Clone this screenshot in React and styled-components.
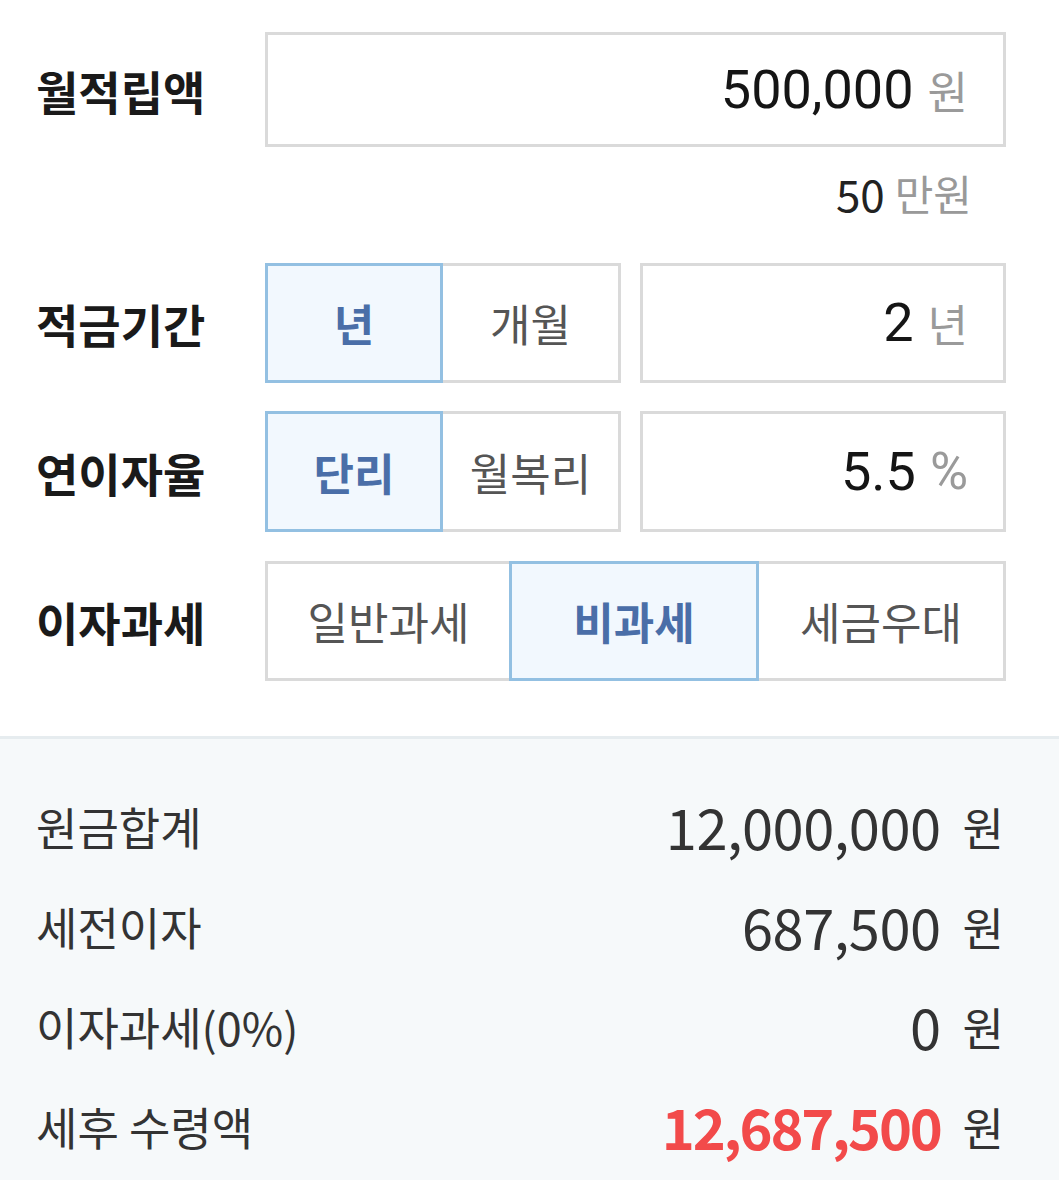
import React from "react";
import styled, { createGlobalStyle } from "styled-components";

const Global = createGlobalStyle`
  html, body { margin: 0; padding: 0; background: #ffffff; }
  body { font-family: "Noto Sans CJK KR", "Noto Sans", sans-serif; -webkit-font-smoothing: antialiased; }
  * { box-sizing: border-box; }
`;

const Page = styled.div`
  width: 1059px;
  min-height: 1180px;
  display: flex;
  flex-direction: column;
  background: #ffffff;
`;

const Form = styled.section`
  padding: 32px 53px 55px 36px;
  display: flex;
  flex-direction: column;
`;

const Row = styled.div`
  display: grid;
  grid-template-columns: 229px 1fr;
  align-items: center;
  height: ${(p) => p.h || 120}px;
  margin-bottom: ${(p) => p.mb || 0}px;
`;

const Label = styled.div`
  font-family: "Noto Sans CJK KR", sans-serif;
  font-weight: 700;
  font-size: 46px;
  color: #1a1a1a;
  letter-spacing: 0;
  line-height: 1;
`;

const Controls = styled.div`
  display: grid;
  grid-template-columns: ${(p) => p.cols || "1fr"};
  column-gap: ${(p) => p.gap || 0}px;
  height: 100%;
`;

const ValueBox = styled.div`
  border: 3px solid #dadada;
  background: #ffffff;
  height: 100%;
  display: flex;
  align-items: center;
  justify-content: flex-end;
  padding-right: 35px;
  gap: 14px;
`;

const Num = styled.span`
  font-family: Roboto, "Liberation Sans", sans-serif;
  font-size: 54px;
  color: #151515;
  line-height: 1;
`;

const Unit = styled.span`
  font-family: ${(p) => (p.latin ? 'Roboto, "Liberation Sans", sans-serif' : '"Noto Sans CJK KR", sans-serif')};
  font-size: ${(p) => (p.latin ? 52 : 44)}px;
  color: #9a9a9a;
  line-height: 1;
`;

const Hint = styled.div`
  height: 116px;
  display: flex;
  align-items: center;
  justify-content: flex-end;
  padding-right: 34px;
  padding-bottom: 24px;
  gap: 10px;
`;

const HintNum = styled.span`
  font-family: "Noto Sans CJK KR", sans-serif;
  font-size: 44px;
  color: #222;
  line-height: 1;
`;

const HintUnit = styled.span`
  font-family: "Noto Sans CJK KR", sans-serif;
  font-size: 42px;
  color: #999;
  line-height: 1;
`;

const Segments = styled.div`
  display: grid;
  grid-template-columns: repeat(${(p) => p.n}, 1fr);
  height: 100%;
`;

const Seg = styled.button`
  all: unset;
  box-sizing: border-box;
  position: relative;
  z-index: ${(p) => (p.active ? 2 : 1)};
  margin-left: ${(p) => (p.first ? 0 : -3)}px;
  border: 3px solid ${(p) => (p.active ? "#93c0e2" : "#dadada")};
  background: ${(p) => (p.active ? "#f2f8fe" : "#ffffff")};
  display: flex;
  align-items: center;
  justify-content: center;
  font-family: "Noto Sans CJK KR", sans-serif;
  font-size: 44px;
  font-weight: ${(p) => (p.active ? 700 : 400)};
  color: ${(p) => (p.active ? "#4a6ea8" : "#555555")};
  line-height: 1;
`;

const Results = styled.section`
  flex: 1;
  border-top: 3px solid #e6ecef;
  background: #f6f9fa;
  padding: 37px 55px 20px 36px;
  display: flex;
  flex-direction: column;
`;

const ResRow = styled.div`
  height: 100px;
  display: flex;
  align-items: center;
  justify-content: space-between;
`;

const ResLabel = styled.span`
  font-family: "Noto Sans CJK KR", sans-serif;
  font-size: 45px;
  color: #333333;
  line-height: 1;
`;

const ResValue = styled.span`
  display: flex;
  align-items: center;
  gap: 22px;
`;

const ResNum = styled.span`
  font-family: "Noto Sans CJK KR", sans-serif;
  font-size: 56px;
  font-weight: ${(p) => (p.hl ? 700 : 400)};
  color: ${(p) => (p.hl ? "#f24a4a" : "#333333")};
  letter-spacing: ${(p) => (p.hl ? -2.2 : -0.5)}px;
  line-height: 1;
`;

const ResUnit = styled.span`
  font-family: "Noto Sans CJK KR", sans-serif;
  font-size: 45px;
  color: #333333;
  line-height: 1;
`;

function SegGroup({ items, active }) {
  return (
    <Segments n={items.length}>
      {items.map((it, i) => (
        <Seg key={it} first={i === 0} active={i === active}>
          {it}
        </Seg>
      ))}
    </Segments>
  );
}

const results = [
  { label: "원금합계", value: "12,000,000" },
  { label: "세전이자", value: "687,500" },
  { label: "이자과세(0%)", value: "0" },
  { label: "세후 수령액", value: "12,687,500", hl: true },
];

export default function App() {
  return (
    <Page>
      <Global />
      <Form>
        <Row h={115}>
          <Label>월적립액</Label>
          <ValueBox>
            <Num>500,000</Num>
            <Unit>원</Unit>
          </ValueBox>
        </Row>
        <Hint>
          <HintNum>50</HintNum>
          <HintUnit>만원</HintUnit>
        </Hint>
        <Row h={120} mb={28}>
          <Label>적금기간</Label>
          <Controls cols="356px 1fr" gap={19}>
            <SegGroup items={["년", "개월"]} active={0} />
            <ValueBox>
              <Num>2</Num>
              <Unit>년</Unit>
            </ValueBox>
          </Controls>
        </Row>
        <Row h={121} mb={29}>
          <Label>연이자율</Label>
          <Controls cols="356px 1fr" gap={19}>
            <SegGroup items={["단리", "월복리"]} active={0} />
            <ValueBox>
              <Num>5.5</Num>
              <Unit latin>%</Unit>
            </ValueBox>
          </Controls>
        </Row>
        <Row h={120}>
          <Label>이자과세</Label>
          <SegGroup items={["일반과세", "비과세", "세금우대"]} active={1} />
        </Row>
      </Form>
      <Results>
        {results.map((r) => (
          <ResRow key={r.label}>
            <ResLabel>{r.label}</ResLabel>
            <ResValue>
              <ResNum hl={r.hl}>{r.value}</ResNum>
              <ResUnit>원</ResUnit>
            </ResValue>
          </ResRow>
        ))}
      </Results>
    </Page>
  );
}
